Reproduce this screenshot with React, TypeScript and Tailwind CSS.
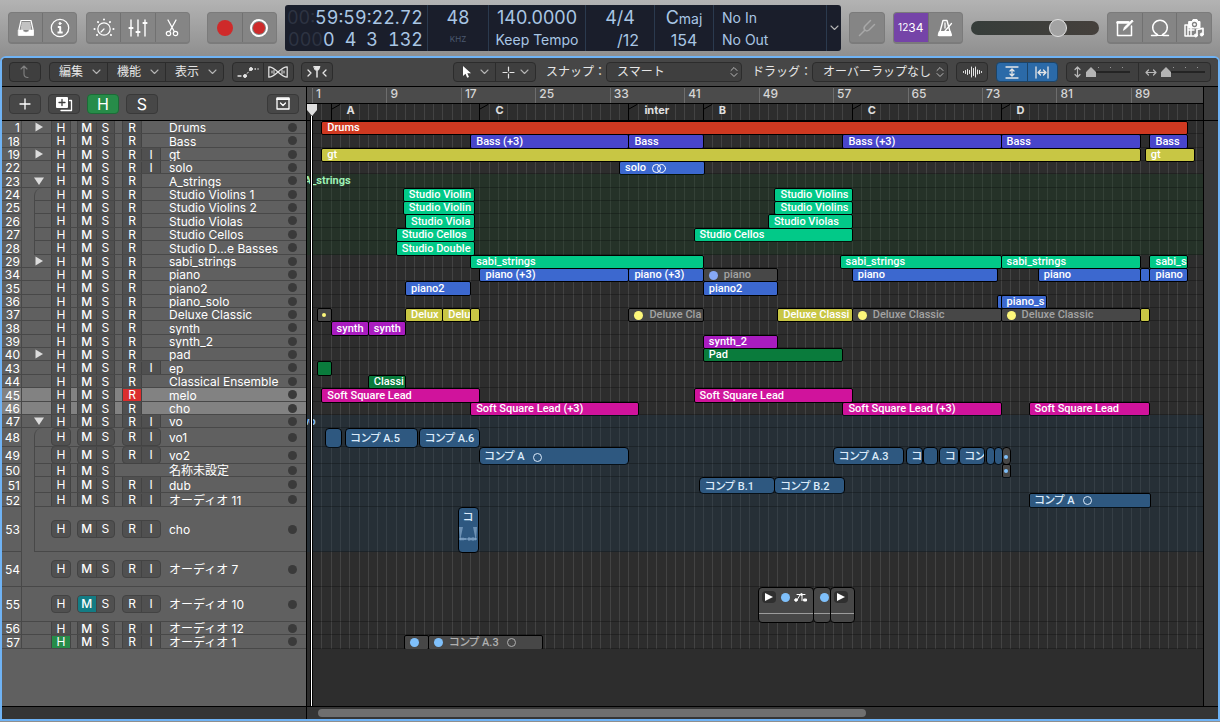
import { useState } from "react";
import type { ReactNode } from "react";
import clsx from "clsx";

interface Clip {
  from: number;
  to: number;
  label?: string;
  color: keyof typeof clipColors;
  mark?: "dot" | "smallDot" | "ring" | "stereo" | "wave" | "play" | "playAll" | "dotWave";
}

interface Track {
  no: number;
  name: string;
  height: number;
  clips: Clip[];
  input?: boolean;
  noRecord?: boolean;
  fold?: "open" | "closed";
  child?: "first" | "rest";
  tint?: "green" | "blue";
  selected?: boolean;
  armed?: boolean;
  muted?: boolean;
  hidden?: boolean;
  folderLabel?: string;
}

const clipColors = {
  red: "bg-[#cf3921] text-white",
  indigo: "bg-[#4845cb] text-white",
  yellow: "bg-[#c8c644] text-white",
  blue: "bg-[#3c68cf] text-white",
  green: "bg-[#02c988] text-white",
  purple: "bg-[#a91cc0] text-white",
  forest: "bg-[#0a7b3c] text-white",
  pink: "bg-[#d0139c] text-white",
  audio: "bg-[#2e5880] text-[#dcebfa]",
  offBlue: "bg-[#474747] text-[#a3a3a3]",
  offYellow: "bg-[#474747] text-[#a3a3a3]",
  offAudio: "bg-[#474747] text-[#b0b0b0]",
};

const dotColors: Record<string, string> = {
  offBlue: "bg-[#86a8f5]",
  offYellow: "bg-[#fdf77a]",
  offAudio: "bg-[#7fc0fb]",
};

// bars that fit in the visible arrange area
const SPAN = 95.75;

const pct = (bars: number) => `${(bars / SPAN) * 100}%`;

const tracks: Track[] = [
  { no: 1, name: "Drums", height: 13, fold: "closed", clips: [{ from: 2, to: 95, label: "Drums", color: "red" }] },
  { no: 18, name: "Bass", height: 14, clips: [
    { from: 18, to: 35, label: "Bass (+3)", color: "indigo" },
    { from: 35, to: 43, label: "Bass", color: "indigo" },
    { from: 58, to: 75, label: "Bass (+3)", color: "indigo" },
    { from: 75, to: 90, label: "Bass", color: "indigo" },
    { from: 91, to: 95, label: "Bass", color: "indigo" },
  ] },
  { no: 19, name: "gt", height: 13, fold: "closed", input: true, clips: [
    { from: 2, to: 90, label: "gt", color: "yellow" },
    { from: 90.5, to: 95.8, label: "gt", color: "yellow" },
  ] },
  { no: 22, name: "solo", height: 13, input: true, clips: [{ from: 34, to: 43.1, label: "solo", color: "blue", mark: "stereo" }] },
  { no: 23, name: "A_strings", height: 14, fold: "open", tint: "green", folderLabel: "A_strings", clips: [] },
  { no: 24, name: "Studio Violins 1", height: 13, child: "first", tint: "green", clips: [
    { from: 10.75, to: 18.4, label: "Studio Violin", color: "green" },
    { from: 50.7, to: 59, label: "Studio Violins", color: "green" },
  ] },
  { no: 25, name: "Studio Violins 2", height: 13, child: "rest", tint: "green", clips: [
    { from: 10.75, to: 18.4, label: "Studio Violin", color: "green" },
    { from: 50.7, to: 59, label: "Studio Violins", color: "green" },
  ] },
  { no: 26, name: "Studio Violas", height: 14, child: "rest", tint: "green", clips: [
    { from: 11, to: 18.4, label: "Studio Viola", color: "green" },
    { from: 50, to: 59, label: "Studio Violas", color: "green" },
  ] },
  { no: 27, name: "Studio Cellos", height: 13, child: "rest", tint: "green", clips: [
    { from: 10, to: 18.4, label: "Studio Cellos", color: "green" },
    { from: 42, to: 59, label: "Studio Cellos", color: "green" },
  ] },
  { no: 28, name: "Studio D...e Basses", height: 14, child: "rest", tint: "green", clips: [
    { from: 10, to: 18.4, label: "Studio Double", color: "green" },
  ] },
  { no: 29, name: "sabi_strings", height: 13, fold: "closed", clips: [
    { from: 18, to: 43, label: "sabi_strings", color: "green" },
    { from: 57.7, to: 75, label: "sabi_strings", color: "green" },
    { from: 75, to: 90, label: "sabi_strings", color: "green" },
    { from: 91, to: 95, label: "sabi_s", color: "green" },
  ] },
  { no: 34, name: "piano", height: 13, clips: [
    { from: 19, to: 35, label: "piano (+3)", color: "blue" },
    { from: 35, to: 43, label: "piano (+3)", color: "blue" },
    { from: 43, to: 51, label: "piano", color: "offBlue", mark: "dot" },
    { from: 59, to: 74.6, label: "piano", color: "blue" },
    { from: 79, to: 90, label: "piano", color: "blue" },
    { from: 90, to: 91, color: "blue" },
    { from: 91, to: 95, label: "piano", color: "blue" },
  ] },
  { no: 35, name: "piano2", height: 14, clips: [
    { from: 11, to: 18, label: "piano2", color: "blue" },
    { from: 43, to: 51, label: "piano2", color: "blue" },
  ] },
  { no: 36, name: "piano_solo", height: 13, clips: [
    { from: 74.6, to: 75, color: "blue" },
    { from: 75, to: 79.9, label: "piano_s", color: "blue" },
  ] },
  { no: 37, name: "Deluxe Classic", height: 13, clips: [
    { from: 1.5, to: 3, color: "offYellow", mark: "smallDot" },
    { from: 11, to: 15, label: "Delux", color: "yellow" },
    { from: 15, to: 18, label: "Delu", color: "yellow" },
    { from: 18, to: 19, color: "yellow" },
    { from: 35, to: 43, label: "Deluxe Cla", color: "offYellow", mark: "dot" },
    { from: 51, to: 59, label: "Deluxe Classi", color: "yellow" },
    { from: 59, to: 75, label: "Deluxe Classic", color: "offYellow", mark: "dot" },
    { from: 75, to: 90, label: "Deluxe Classic", color: "offYellow", mark: "dot" },
    { from: 90, to: 91, color: "yellow" },
  ] },
  { no: 38, name: "synth", height: 14, clips: [
    { from: 3, to: 7, label: "synth", color: "purple" },
    { from: 7, to: 11, label: "synth", color: "purple" },
  ] },
  { no: 39, name: "synth_2", height: 13, clips: [{ from: 43, to: 51, label: "synth_2", color: "purple" }] },
  { no: 40, name: "pad", height: 13, fold: "closed", clips: [{ from: 43, to: 58, label: "Pad", color: "forest" }] },
  { no: 43, name: "ep", height: 14, input: true, clips: [{ from: 1.5, to: 3, color: "forest" }] },
  { no: 44, name: "Classical Ensemble", height: 13, clips: [{ from: 7, to: 11, label: "Classi", color: "forest" }] },
  { no: 45, name: "melo", height: 14, selected: true, armed: true, clips: [
    { from: 2, to: 19, label: "Soft Square Lead", color: "pink" },
    { from: 42, to: 59, label: "Soft Square Lead", color: "pink" },
  ] },
  { no: 46, name: "cho", height: 13, selected: true, clips: [
    { from: 18, to: 36, label: "Soft Square Lead (+3)", color: "pink" },
    { from: 58, to: 75, label: "Soft Square Lead (+3)", color: "pink" },
    { from: 78, to: 91, label: "Soft Square Lead", color: "pink" },
  ] },
  { no: 47, name: "vo", height: 13, fold: "open", input: true, tint: "blue", folderLabel: "vo", clips: [] },
  { no: 48, name: "vo1", height: 19, child: "first", input: true, tint: "blue", clips: [
    { from: 2.4, to: 4.1, color: "audio" },
    { from: 4.5, to: 12.3, label: "コンプ A.5", color: "audio" },
    { from: 12.5, to: 19, label: "コンプ A.6", color: "audio" },
  ] },
  { no: 49, name: "vo2", height: 17, child: "rest", input: true, tint: "blue", clips: [
    { from: 18.9, to: 35, label: "コンプ A", color: "audio", mark: "ring" },
    { from: 57, to: 64.5, label: "コンプ A.3", color: "audio" },
    { from: 64.8, to: 66.6, label: "コ", color: "audio" },
    { from: 66.7, to: 68.2, color: "audio" },
    { from: 68.4, to: 70.4, label: "コ", color: "audio" },
    { from: 70.5, to: 73.2, label: "コン", color: "audio" },
    { from: 73.4, to: 74.3, color: "audio" },
    { from: 74.3, to: 75.1, color: "audio" },
    { from: 75.1, to: 76, color: "offAudio", mark: "smallDot" },
  ] },
  { no: 50, name: "名称未設定", height: 13, child: "rest", noRecord: true, tint: "blue", clips: [
    { from: 75.1, to: 76, color: "offAudio", mark: "smallDot" },
  ] },
  { no: 51, name: "dub", height: 16, child: "rest", input: true, tint: "blue", clips: [
    { from: 42.6, to: 50.6, label: "コンプ B.1", color: "audio" },
    { from: 50.7, to: 58.2, label: "コンプ B.2", color: "audio" },
  ] },
  { no: 52, name: "オーディオ 11", height: 14, child: "rest", input: true, tint: "blue", clips: [
    { from: 78, to: 91.1, label: "コンプ A", color: "audio", mark: "ring" },
  ] },
  { no: 53, name: "cho", height: 45, child: "rest", input: true, tint: "blue", clips: [
    { from: 16.7, to: 18.8, label: "コ", color: "audio", mark: "wave" },
  ] },
  { no: 54, name: "オーディオ 7", height: 35, input: true, clips: [] },
  { no: 55, name: "オーディオ 10", height: 35, input: true, muted: true, clips: [
    { from: 48.9, to: 54.8, color: "offAudio", mark: "playAll" },
    { from: 54.8, to: 56.7, color: "offAudio", mark: "dotWave" },
    { from: 56.7, to: 59.2, color: "offAudio", mark: "play" },
  ] },
  { no: 56, name: "オーディオ 12", height: 13, input: true, clips: [] },
  { no: 57, name: "オーディオ 1", height: 14, input: true, hidden: true, clips: [
    { from: 10.9, to: 13.5, color: "offAudio", mark: "dot" },
    { from: 13.5, to: 25.7, label: "コンプ A.3", color: "offAudio", mark: "dot" },
  ] },
];

const rulerBars = [1, 9, 17, 25, 33, 41, 49, 57, 65, 73, 81, 89];

const markers = [
  { bar: 3, name: "A" },
  { bar: 19, name: "C" },
  { bar: 35, name: "inter" },
  { bar: 43, name: "B" },
  { bar: 59, name: "C" },
  { bar: 75, name: "D" },
];

function Icon({ w, h, children, className }: { w: number; h: number; children: ReactNode; className?: string }) {
  return (
    <svg width={w} height={h} viewBox={`0 0 ${w} ${h}`} fill="none" stroke="currentColor" strokeLinecap="round" strokeLinejoin="round" className={clsx("shrink-0", className)} aria-hidden="true">
      {children}
    </svg>
  );
}

function Chevron() {
  return <Icon w={9} h={6} className="text-[#b4b4b4]"><path d="M1 1l3.500 3.500L8 1" strokeWidth="1.100" /></Icon>;
}

function TopButton({ label, children, className }: { label: string; children: ReactNode; className?: string }) {
  return (
    <button aria-label={label} className={clsx("flex h-full flex-1 items-center justify-center", className ?? "text-white")}>
      {children}
    </button>
  );
}

function TopGroup({ className, children }: { className: string; children: ReactNode }) {
  return (
    <div className={clsx("flex h-8 shrink-0 divide-x divide-[#717171] overflow-hidden rounded border border-b-2 border-[#7b7b7b] bg-[#858585]", className)}>
      {children}
    </div>
  );
}

function TopBar() {
  return (
    <header className="flex h-14 shrink-0 items-center bg-linear-to-b from-[#b3b3b3] to-[#8f8f8f] px-2">
      <TopGroup className="w-[69px]">
        <TopButton label="Library">
          <Icon w={18} h={18}>
            <path d="M4 1.500h10l2 9v5.500H2v-5.500z" strokeWidth="1.200" />
            <path d="M5 4h8M4.700 6h8.600M4.400 8h9.200M4.200 10h9.600" strokeWidth="1" />
            <path d="M1.500 11h4.500c0 3 6 3 6 0h4.500v5.500h-15z" fill="currentColor" strokeWidth="0.500" />
          </Icon>
        </TopButton>
        <TopButton label="Inspector">
          <Icon w={20} h={20}>
            <circle cx="10" cy="10" r="8.700" strokeWidth="1.300" />
            <circle cx="10" cy="5.500" r="1" fill="currentColor" />
            <path d="M7.800 9h2.400v5.500M7.500 14.500h5.200" strokeWidth="2" strokeLinecap="butt" />
          </Icon>
        </TopButton>
      </TopGroup>
      <TopGroup className="ml-[9px] w-[104px]">
        <TopButton label="Smart Controls">
          <Icon w={22} h={20}>
            <circle cx="11" cy="11" r="6.200" strokeWidth="1.200" />
            <path d="M11 11l-3 3" strokeWidth="1.200" />
            <path d="M11 1.500v.1M5 4l.1.100M17 4l-.1.100M1.500 11h.1M20.500 11h-.1M4 17l.1-.1M18 17l-.1-.1" strokeWidth="2" />
          </Icon>
        </TopButton>
        <TopButton label="Mixer">
          <Icon w={20} h={20}>
            <path d="M3 2v16M10 2v16M17 2v16" strokeWidth="1.400" />
            <path d="M1.500 10h3M8.500 14h3M15.500 5h3" strokeWidth="2.200" />
          </Icon>
        </TopButton>
        <TopButton label="Editors">
          <Icon w={14} h={18}>
            <path d="M3 1l6 11M11 1L5 12" strokeWidth="1.300" />
            <circle cx="3.500" cy="14.500" r="2.200" strokeWidth="1.200" />
            <circle cx="10.500" cy="14.500" r="2.200" strokeWidth="1.200" />
          </Icon>
        </TopButton>
      </TopGroup>
      <TopGroup className="ml-[17px] w-[70px]">
        <TopButton label="Record"><span className="size-4 rounded-full bg-[#cf2a2a]" /></TopButton>
        <TopButton label="Capture Recording">
          <span className="flex size-[18px] items-center justify-center rounded-full border-2 border-white">
            <span className="size-3 rounded-full bg-[#cf2a2a]" />
          </span>
        </TopButton>
      </TopGroup>

      <section className="ml-2 flex h-[46px] min-w-0 flex-1 divide-x divide-[#2b3a4e] overflow-hidden rounded-[3px] bg-[#1a1e2b] text-[#a9c6e4]">
        <div className="flex w-[143px] shrink-0 flex-col items-end pt-0.5 pr-1 text-[18px] leading-[22px] whitespace-pre tabular-nums">
          <div><span className="text-[#2d3342]">00:</span>59:59:22.72</div>
          <div className="flex gap-2.5"><span><span className="text-[#2d3342]">000</span>0</span><span>4</span><span>3</span><span>132</span></div>
        </div>
        <div className="flex w-[61px] shrink-0 flex-col items-center">
          <span className="text-[18px] leading-[26px]">48</span>
          <span className="text-[8px] leading-4 text-[#4b5a70]">KHZ</span>
        </div>
        <div className="flex w-[97px] shrink-0 flex-col items-center">
          <span className="text-[18px] leading-[26px]">140.0000</span>
          <span className="text-sm leading-[18px] whitespace-nowrap">Keep Tempo</span>
        </div>
        <div className="flex w-[69px] shrink-0 flex-col items-center">
          <span className="text-[18px] leading-[26px]">4/4</span>
          <span className="pl-4 text-base leading-[18px]">/12</span>
        </div>
        <div className="flex w-[59px] shrink-0 flex-col items-center">
          <span className="text-[18px] leading-[26px]">C<span className="text-sm">maj</span></span>
          <span className="text-base leading-[18px]">154</span>
        </div>
        <div className="flex min-w-0 flex-1 flex-col pl-2 text-sm">
          <span className="leading-[26px]">No In</span>
          <span className="leading-[18px]">No Out</span>
        </div>
        <button aria-label="Display mode" className="flex w-3.5 items-center justify-center"><Chevron /></button>
      </section>

      <TopGroup className="ml-2 w-9">
        <TopButton label="Tuner" className="text-[#a8a8a8]">
          <Icon w={18} h={18}>
            <path d="M1.500 16.500L7 11M16.500 5.500L11 11c-3 2.500-6.500-1-4-4l5.500-5.500" strokeWidth="1.500" />
          </Icon>
        </TopButton>
      </TopGroup>
      <TopGroup className="ml-2 w-[70px]">
        <TopButton label="Count In" className="bg-[#7544a8] text-white">
          <span className="text-[10px]">12</span><span className="text-xs">34</span>
        </TopButton>
        <TopButton label="Metronome">
          <Icon w={16} h={18}>
            <path d="M6 1.500h4l4 15H2z" strokeWidth="1.400" />
            <path d="M2.500 12.500h11l1 4h-13z" fill="currentColor" strokeWidth="1" />
            <path d="M8 12l6.500-7.500M8 4v5" strokeWidth="1.300" />
          </Icon>
        </TopButton>
      </TopGroup>
      <input
        type="range"
        aria-label="Master volume"
        defaultValue={71}
        className="mx-2 h-3.5 w-32 shrink-0 appearance-none rounded-full bg-linear-to-r from-[#363d3a] to-[#45403c] [&::-webkit-slider-thumb]:size-[18px] [&::-webkit-slider-thumb]:appearance-none [&::-webkit-slider-thumb]:rounded-full [&::-webkit-slider-thumb]:border [&::-webkit-slider-thumb]:border-[#e2e2e2] [&::-webkit-slider-thumb]:bg-[#a3a3a3]"
      />
      <TopGroup className="w-[105px]">
        <TopButton label="Note Pad">
          <Icon w={18} h={18}>
            <path d="M13 3H1.500v13.500h14V7" strokeWidth="1.500" />
            <path d="M1.500 3.500H12" strokeWidth="2.500" />
            <path d="M7.500 11l1-3L16 1l1.200 1.200L10 9.500z" fill="currentColor" strokeWidth="0.800" />
          </Icon>
        </TopButton>
        <TopButton label="Loop Browser">
          <Icon w={20} h={18}>
            <path d="M1.500 16.500h5q2 0 .8-1.200A7.300 7.300 0 1 1 12.700 15.300q-1.200 1.200.8 1.200h5" strokeWidth="1.400" />
            <path d="M6 16.500h8" strokeWidth="1" />
          </Icon>
        </TopButton>
        <TopButton label="Media Browser">
          <Icon w={22} h={20}>
            <path d="M2 7h3v11H2zM5 12h6M5 18h6M8 7v11" strokeWidth="1.500" />
            <path d="M6 3.500h3l1-2h4l1 2h2v6.500H6z" fill="currentColor" strokeWidth="1" />
            <circle cx="11.500" cy="6.500" r="2" stroke="#858585" strokeWidth="1.300" />
            <path d="M14 17.500v-6l6-1.200v6" strokeWidth="1.700" />
            <circle cx="12.800" cy="17.500" r="1.500" fill="currentColor" />
            <circle cx="18.800" cy="16.500" r="1.500" fill="currentColor" />
          </Icon>
        </TopButton>
      </TopGroup>
    </header>
  );
}

const boxStyle = "flex h-5 shrink-0 divide-x divide-[#2c2c2c] overflow-hidden rounded border border-[#2c2c2c] bg-[#3f3f3f]";

function ToolSelect({ id, label, options }: { id: string; label: string; options: string[] }) {
  return (
    <>
      <label htmlFor={id} className="mr-2 ml-2.5 w-[52px] shrink-0 whitespace-nowrap">{label}</label>
      <div className="relative shrink-0">
        <select id={id} className="block h-5 w-[136px] appearance-none rounded border border-[#2c2c2c] bg-[#3f3f3f] pl-2.5 text-[#e6e6e6]">
          {options.map((o) => <option key={o}>{o}</option>)}
        </select>
        <Icon w={8} h={12} className="pointer-events-none absolute top-1 right-1 text-[#b9b9b9]">
          <path d="M1 4.500l3-3 3 3M1 7.500l3 3 3-3" strokeWidth="1" />
        </Icon>
      </div>
    </>
  );
}

function ZoomSlider({ label, children }: { label: string; children: ReactNode }) {
  return (
    <label className="flex flex-1 items-center gap-1 pl-1.5">
      {children}
      <span className="relative flex items-center">
        <span className="pointer-events-none absolute -top-1 left-3 flex gap-[11px]">
          {[0, 1, 2].map((n) => <span key={n} className="size-px bg-[#999]" />)}
        </span>
        <input
          type="range"
          aria-label={label}
          defaultValue={0}
          className="h-0.5 w-11 appearance-none bg-[#242424] [&::-webkit-slider-thumb]:h-2.5 [&::-webkit-slider-thumb]:w-2.5 [&::-webkit-slider-thumb]:appearance-none [&::-webkit-slider-thumb]:bg-[#b4b4b4] [&::-webkit-slider-thumb]:[clip-path:polygon(50%_0,100%_50%,100%_100%,0_100%,0_50%)]"
        />
      </span>
    </label>
  );
}

function ToolBar() {
  return (
    <div className="flex h-[29px] shrink-0 items-center border-b border-black bg-[#464646] px-[7px] text-xs text-[#e6e6e6]">
      <div className={clsx(boxStyle, "w-8")}>
        <button aria-label="Up" className="flex flex-1 items-center justify-center text-[#828282]">
          <Icon w={12} h={14}><path d="M2 4l3-3 3 3M5 1v8q0 3.500 4 3.500" strokeWidth="1.100" /></Icon>
        </button>
      </div>
      <div className={clsx(boxStyle, "ml-2 w-[175px]")}>
        {["編集", "機能", "表示"].map((m) => (
          <button key={m} className="flex flex-1 items-center justify-between pr-1.5 pl-[9px] whitespace-nowrap">
            {m}<Chevron />
          </button>
        ))}
      </div>
      <div className={clsx(boxStyle, "ml-2 w-[62px]")}>
        <button aria-label="Automation" className="flex flex-1 items-center justify-center">
          <Icon w={22} h={14}>
            <path d="M1 11h3M18 4h.5M21 4h.1" strokeWidth="1.300" />
            <path d="M8 11l6-7" strokeWidth="1" strokeDasharray="1.500 2" />
            <circle cx="8" cy="11" r="1.500" fill="currentColor" />
            <circle cx="14" cy="4" r="1.500" fill="currentColor" />
          </Icon>
        </button>
        <button aria-label="Flex" className="flex flex-1 items-center justify-center">
          <Icon w={20} h={12}>
            <path d="M.8.800v10.400C8 11.200 12 .8 19.200.800v10.400C12 11.200 8 .8.800.800z" strokeWidth="1.200" />
            <path d="M4 5v2M6 4v4M14 4v4M16 5v2" strokeWidth="1" />
          </Icon>
        </button>
      </div>
      <div className={clsx(boxStyle, "ml-[7px] w-8")}>
        <button aria-label="Catch" className="flex flex-1 items-center justify-center">
          <Icon w={20} h={14}>
            <path d="M1 5l3 3-3 3M19 5l-3 3 3 3" strokeWidth="1.300" />
            <path d="M7 1.500h6l-1.500 3.500h-3z" fill="currentColor" />
            <path d="M10 4v8" strokeWidth="1.500" />
          </Icon>
        </button>
      </div>
      <div className="flex-1" />
      <div className={clsx(boxStyle, "w-[83px]")}>
        <button aria-label="Pointer tool" className="flex flex-1 items-center justify-between pr-1.5 pl-2">
          <Icon w={10} h={14}>
            <path d="M1 1v10l2.500-2.300 1.700 4 1.800-.8-1.700-3.700H9z" fill="#fff" stroke="none" />
          </Icon>
          <Chevron />
        </button>
        <button aria-label="Marquee tool" className="flex flex-1 items-center justify-between pr-1.5 pl-1.5">
          <Icon w={13} h={13}><path d="M6.500 1v4M6.500 8v4M1 6.500h4M8 6.500h4" strokeWidth="1.200" /></Icon>
          <Chevron />
        </button>
      </div>
      <ToolSelect id="snap" label="スナップ：" options={["スマート"]} />
      <ToolSelect id="drag" label="ドラッグ：" options={["オーバーラップなし"]} />
      <div className={clsx(boxStyle, "ml-2 w-8")}>
        <button aria-label="Waveform zoom" className="flex flex-1 items-center justify-center">
          <Icon w={21} h={14}>
            <path d="M1.500 6.500v1M3.500 5.500v3M5.500 4.500v5M7.500 5.500v3M9.500 2v10M11.500 3.500v7M13.500 2v10M15.500 5v4M17.500 5.500v3M19.500 6.500v1" strokeWidth="1" />
          </Icon>
        </button>
      </div>
      <div className="ml-2 flex h-5 w-[62px] shrink-0 divide-x divide-[#1d4467] overflow-hidden rounded border border-[#1d4467] bg-[#2b6aa8]">
        <button aria-label="Vertical auto zoom" className="flex flex-1 items-center justify-center">
          <Icon w={14} h={13}><path d="M1 1h12M1 12h12M7 3.500v6M5 5l2-2 2 2M5 8l2 2 2-2" strokeWidth="1.300" /></Icon>
        </button>
        <button aria-label="Horizontal auto zoom" className="flex flex-1 items-center justify-center">
          <Icon w={14} h={13}><path d="M1 1v11M13 1v11M3.500 6.500h7M5.500 4l-2.500 2.500L5.500 9M8.500 4L11 6.500 8.500 9" strokeWidth="1.300" /></Icon>
        </button>
      </div>
      <div className={clsx(boxStyle, "ml-2 w-[145px] text-[#b9b9b9]")}>
        <ZoomSlider label="Vertical zoom">
          <Icon w={9} h={12}><path d="M4.500 1v10M2 3.500L4.500 1 7 3.500M2 8.500L4.500 11 7 8.500" strokeWidth="1.200" /></Icon>
        </ZoomSlider>
        <ZoomSlider label="Horizontal zoom">
          <Icon w={12} h={9}><path d="M1 4.500h10M3.500 2L1 4.500 3.500 7M8.500 2L11 4.500 8.500 7" strokeWidth="1.200" /></Icon>
        </ZoomSlider>
      </div>
    </div>
  );
}

const headButton = "flex h-5 w-8 items-center justify-center rounded border text-white";

function ListHead() {
  return (
    <div className="flex h-[34px] shrink-0 items-center gap-[7px] border-b border-black bg-[#535353] px-[7px]">
      <button aria-label="Add track" className={clsx(headButton, "border-[#393939] bg-[#474747]")}>
        <Icon w={12} h={12}><path d="M6 1v10M1 6h10" strokeWidth="1.300" /></Icon>
      </button>
      <button aria-label="Duplicate track" className={clsx(headButton, "border-[#393939] bg-[#474747]")}>
        <Icon w={18} h={16}>
          <path d="M6 14.500h10.500V4.500h-2" strokeWidth="1.300" />
          <rect x="1" y="1" width="12" height="11" rx="1" fill="currentColor" stroke="none" />
          <path d="M7 3.500v6M4 6.500h6" stroke="#3d3d3d" strokeWidth="1.300" />
        </Icon>
      </button>
      <button className={clsx(headButton, "border-[#1c6b36] bg-[#278c49] text-base")}>H</button>
      <button className={clsx(headButton, "border-[#393939] bg-[#474747] text-base")}>S</button>
      <button aria-label="Header options" className={clsx(headButton, "ml-auto border-[#393939] bg-[#474747]")}>
        <Icon w={14} h={13}>
          <rect x="1" y="1" width="12" height="11" strokeWidth="1.300" />
          <path d="M1 2.200h12" strokeWidth="1.800" />
          <path d="M4.500 6L7 8.500 9.500 6" strokeWidth="1.300" />
        </Icon>
      </button>
    </div>
  );
}

const pill = "flex shrink-0 divide-x divide-[#434343] overflow-hidden border-[#434343] bg-[#505050]";
const key = "flex w-[18px] flex-1 items-center justify-center text-xs leading-3 text-white";

function TrackRow({ track }: { track: Track }) {
  const [muted, setMuted] = useState(!!track.muted);
  const [armed, setArmed] = useState(!!track.armed);

  // low rows have no room for the rounded frame of the buttons
  const shape = track.height > 16 ? "h-[18px] rounded border" : "h-full border-x pt-px";

  return (
    <li
      style={{ height: track.height }}
      className={clsx("flex items-center overflow-hidden text-white", track.selected ? "bg-[#828282]" : "bg-[#606060]")}
    >
      <span className="flex h-full w-5 shrink-0 items-center justify-end border-r border-b border-[#484848] pt-0.5 pr-px text-xs leading-3">{track.no}</span>
      {track.child && <span className="h-full w-3 shrink-0" />}
      <span
        className={clsx(
          "flex h-full min-w-0 flex-1 items-center border-b border-[#484848]",
          track.child && "border-l",
          track.child === "first" && "rounded-tl-lg",
        )}
      >
        <span className={clsx("flex shrink-0 justify-center text-[#dcdcdc]", track.child ? "w-4" : "w-[29px] pl-1")}>
          {track.fold === "closed" && <Icon w={8} h={10}><path d="M.5.500L8 5 .5 9.500z" fill="currentColor" stroke="none" /></Icon>}
          {track.fold === "open" && <Icon w={10} h={8}><path d="M0 .5h10L5 8z" fill="currentColor" stroke="none" /></Icon>}
        </span>
        <span className={clsx(pill, shape, "w-5")}>
          <button className={clsx(key, track.hidden && "bg-[#278c49]")}>H</button>
        </span>
        <span className={clsx(pill, shape, "ml-1.5 w-[38px]")}>
          <button className={clsx(key, "font-medium", muted && "bg-[#137c84]")} onClick={() => setMuted(!muted)}>M</button>
          <button className={key}>S</button>
        </span>
        <span className="ml-[7px] flex h-full w-[47px] shrink-0 items-center">
          {!track.noRecord && (
            <span className={clsx(pill, shape, track.input ? "w-[39px]" : "w-5")}>
              <button className={clsx(key, armed && "bg-[#db2d2d]")} onClick={() => setArmed(!armed)}>R</button>
              {track.input && <button className={key}>I</button>}
            </span>
          )}
        </span>
        <span className="flex-1 pt-0.5 text-xs leading-3 whitespace-nowrap">{track.name}</span>
        <span className="mr-[9px] size-[9px] shrink-0 rounded-full bg-[#3a3a3a]" />
      </span>
    </li>
  );
}

function Ring() {
  return <span className="ml-2 size-[9px] shrink-0 rounded-full border border-current" />;
}

function PlayMark() {
  return (
    <span className="flex h-3 w-3.5 items-center justify-center rounded-sm bg-[#2f2f2f]">
      <Icon w={8} h={8}><path d="M0 0l8 4-8 4z" fill="#fff" stroke="none" /></Icon>
    </span>
  );
}

function ClipBox({ clip, tall }: { clip: Clip; tall: boolean }) {
  const { mark, color } = clip;
  const big = mark === "play" || mark === "playAll" || mark === "dotWave";

  return (
    <div
      style={{ left: pct(clip.from - 1), width: `calc(${pct(clip.to - clip.from)} + 1px)` }}
      className={clsx(
        "absolute top-0 -bottom-px flex overflow-hidden border border-black text-[11px] whitespace-nowrap",
        clipColors[color],
        tall ? "rounded" : "rounded-xs",
        big || mark === "wave" ? "flex-col" : "items-center",
        !big && mark !== "smallDot" && mark !== "wave" && "pl-[5px]",
        tall && !big && mark !== "wave" && "pt-0.5",
        mark === "smallDot" && "justify-center",
      )}
    >
      {mark === "dot" && <span className={clsx("mr-1.5 size-[9px] shrink-0 rounded-full", dotColors[color])} />}
      {mark === "smallDot" && <span className={clsx("size-1 shrink-0 rounded-full", dotColors[color])} />}
      {clip.label && <span className={clsx("leading-3 font-medium", mark === "wave" && "pt-1 pl-1")}>{clip.label}</span>}
      {mark === "stereo" && (
        <Icon w={14} h={9} className="ml-1.5">
          <circle cx="4.500" cy="4.500" r="4" />
          <circle cx="9.500" cy="4.500" r="4" />
        </Icon>
      )}
      {(mark === "ring" || (mark === "dot" && color === "offAudio" && clip.label)) && <Ring />}
      {mark === "wave" && (
        <Icon w={18} h={24} className="mt-0.5 text-[#9fbfdf]">
          <path d="M0 1h4l-3 14zM18 1h-4l3 14z" fill="#6c90b3" stroke="none" />
          <path d="M0 13h18M2 12v2M4 12v2M6 12.500v1M10 11.500v3M12 12v2M14 11.500v3M16 12v2" strokeWidth="0.800" />
        </Icon>
      )}
      {big && (
        <>
          <div className="mt-[3px] flex h-3 shrink-0 items-center gap-0.5 pl-[3px]">
            {mark !== "dotWave" && <PlayMark />}
            {mark !== "play" && <span className="ml-[3px] size-[9px] shrink-0 rounded-full bg-[#7fc0fb]" />}
            {mark === "playAll" && (
              <Icon w={14} h={10} className="ml-0.5 text-white">
                <path d="M3 2.500h8M6 3L3 8M8 3v5.500" strokeWidth="1" />
                <circle cx="2" cy="8" r="1.300" fill="currentColor" />
                <circle cx="7.500" cy="2.500" r="1" fill="currentColor" />
                <path d="M10 7h2.500v2H10z" fill="currentColor" />
              </Icon>
            )}
          </div>
          <div className="mt-2.5 h-px w-full shrink-0 bg-[#9c9c9c]" />
        </>
      )}
    </div>
  );
}

function Grid() {
  return (
    <div className="absolute inset-y-0 right-0 left-[5px]">
      {Array.from({ length: 96 }, (_, i) => (
        <span key={i} style={{ left: pct(i) }} className="absolute inset-y-0 w-px bg-[#434343]" />
      ))}
    </div>
  );
}

function Lane({ track }: { track: Track }) {
  return (
    <div
      style={{ height: track.height }}
      className={clsx("relative pl-[5px]", track.tint === "green" && "bg-[#14401f]/30", track.tint === "blue" && "bg-[#17344c]/30")}
    >
      <div className="relative h-full">
        <span className="absolute inset-x-0 bottom-0 h-px bg-black/25" />
        {track.folderLabel && (
          <span className={clsx("absolute right-full -mr-12 w-14 text-[11px] leading-[14px] font-bold whitespace-nowrap", track.tint === "green" ? "text-[#9df0b4]" : "text-[#86bdf0]")}>
            {track.folderLabel}
          </span>
        )}
        {track.clips.map((clip) => <ClipBox key={clip.from} clip={clip} tall={track.height > 14} />)}
      </div>
    </div>
  );
}

function Arrange() {
  return (
    <div className="relative flex min-w-0 flex-1 flex-col overflow-hidden bg-[#2d2d2d]">
      <div className="h-[17px] shrink-0 border-b border-black bg-[#4b4b4b] pl-[5px]">
        <div className="relative h-full">
          {rulerBars.map((bar) => (
            <span key={bar} style={{ left: pct(bar - 1) }} className="absolute top-px bottom-0 border-l border-[#6d6d6d] pl-[3px] text-xs leading-[11px] font-medium text-[#d6d6d6]">
              {bar}
            </span>
          ))}
        </div>
      </div>
      <div className="relative h-[17px] shrink-0 border-b border-black pl-[5px]">
        <Grid />
        <div className="relative h-full">
          {markers.map((m) => (
            <span key={m.bar} style={{ left: pct(m.bar - 1) }} className="absolute inset-y-0 flex border-l border-black text-[11px] leading-3 font-bold text-[#e0e0e0]">
              <Icon w={10} h={8} className="mr-[5px] text-black"><path d="M0 5l8-4.500" strokeWidth="1" /></Icon>
              {m.name}
            </span>
          ))}
        </div>
      </div>
      <div className="relative overflow-hidden font-['Roboto','Noto_Sans_CJK_JP',sans-serif] [font-feature-settings:'palt']">
        <Grid />
        <div className="relative">
          {tracks.map((t) => <Lane key={t.no} track={t} />)}
        </div>
      </div>
      {/* playhead */}
      <div className="absolute top-4 bottom-0 left-0 flex w-[9px] flex-col items-center">
        <Icon w={10} h={13}><path d="M0 1h10v6l-5 6-5-6z" fill="#dedede" stroke="none" /></Icon>
        <span className="w-[3px] flex-1 border-x border-black bg-white" />
      </div>
    </div>
  );
}

export default function App() {
  return (
    <div className="flex h-screen flex-col overflow-hidden bg-[#8f8f8f] font-['Inter','Noto_Sans_CJK_JP',sans-serif]">
      <TopBar />
      <main className="mb-px flex min-h-0 flex-1 flex-col overflow-hidden rounded-t-md border-2 border-[#6fb3f5] bg-[#333]">
        <ToolBar />
        <div className="flex min-h-0 flex-1">
          <aside className="flex w-[305px] shrink-0 flex-col border-r border-black bg-[#606060]">
            <ListHead />
            <ul>
              {tracks.map((t) => <TrackRow key={t.no} track={t} />)}
            </ul>
          </aside>
          <Arrange />
          <div className="w-[15px] shrink-0 border-l border-black bg-[#393939]">
            <div className="h-[34px] border-b border-black" />
          </div>
        </div>
        <div className="flex h-[13px] shrink-0 border-t border-black bg-[#353535]">
          <div className="w-[305px] shrink-0 border-r border-black" />
          <div className="flex flex-1 items-center pr-4 pl-[11px]">
            <div className="h-2 w-[62%] rounded-full bg-[#6f6f6f]" />
          </div>
        </div>
      </main>
    </div>
  );
}
